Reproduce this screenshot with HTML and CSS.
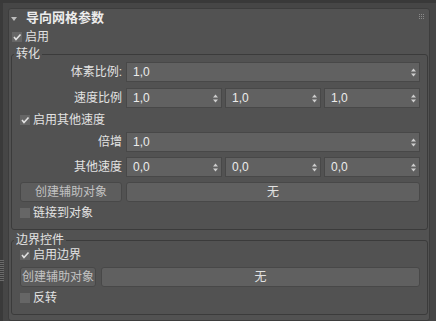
FILE: index.html
```html
<!DOCTYPE html>
<html>
<head>
<meta charset="utf-8">
<link rel="stylesheet" href="styles.css">
</head>
<body>
<div class="topbar"></div>
<div class="app">
  <div class="rail"><div class="rail-grip"></div></div>
  <div class="panel">
    <div class="panel-head">
      <svg class="caret" width="6" height="4" viewBox="0 0 6 4"><polygon points="0,0 6,0 3,4" fill="#bdbdbd"/></svg>
      <span class="title">导向网格参数</span>
      <svg class="dots" width="5" height="5" viewBox="0 0 5 5" fill="#8a8a8a">
        <rect x="0" y="0" width="1" height="1"/><rect x="2" y="0" width="1" height="1"/><rect x="4" y="0" width="1" height="1"/>
        <rect x="0" y="2" width="1" height="1"/><rect x="2" y="2" width="1" height="1"/><rect x="4" y="2" width="1" height="1"/>
        <rect x="0" y="4" width="1" height="1"/><rect x="2" y="4" width="1" height="1"/><rect x="4" y="4" width="1" height="1"/>
      </svg>
    </div>
    <div class="check top-check"><span class="box"><svg width="10" height="10" viewBox="0 0 10 10"><polyline points="2,5 4,7.5 8.5,2.5" fill="none" stroke="#e2e2e2" stroke-width="1.6"/></svg></span>启用</div>

    <fieldset class="group">
      <legend>转化</legend>
      <div class="row first">
        <span class="lbl">体素比例:</span>
        <div class="field"><span>1,0</span><svg class="spin" width="5" height="9" viewBox="0 0 5 9"><polygon points="0,3.5 2.5,0.5 5,3.5" fill="#cfcfcf"/><polygon points="0,5.5 2.5,8.5 5,5.5" fill="#cfcfcf"/></svg></div>
      </div>
      <div class="row">
        <span class="lbl">速度比例</span>
        <div class="triple">
          <div class="field"><span>1,0</span><svg class="spin" width="5" height="9" viewBox="0 0 5 9"><polygon points="0,3.5 2.5,0.5 5,3.5" fill="#cfcfcf"/><polygon points="0,5.5 2.5,8.5 5,5.5" fill="#cfcfcf"/></svg></div>
          <div class="field"><span>1,0</span><svg class="spin" width="5" height="9" viewBox="0 0 5 9"><polygon points="0,3.5 2.5,0.5 5,3.5" fill="#cfcfcf"/><polygon points="0,5.5 2.5,8.5 5,5.5" fill="#cfcfcf"/></svg></div>
          <div class="field"><span>1,0</span><svg class="spin" width="5" height="9" viewBox="0 0 5 9"><polygon points="0,3.5 2.5,0.5 5,3.5" fill="#cfcfcf"/><polygon points="0,5.5 2.5,8.5 5,5.5" fill="#cfcfcf"/></svg></div>
        </div>
      </div>
      <div class="check in-check"><span class="box"><svg width="10" height="10" viewBox="0 0 10 10"><polyline points="2,5 4,7.5 8.5,2.5" fill="none" stroke="#e2e2e2" stroke-width="1.6"/></svg></span>启用其他速度</div>
      <div class="row">
        <span class="lbl">倍增</span>
        <div class="field"><span>1,0</span><svg class="spin" width="5" height="9" viewBox="0 0 5 9"><polygon points="0,3.5 2.5,0.5 5,3.5" fill="#cfcfcf"/><polygon points="0,5.5 2.5,8.5 5,5.5" fill="#cfcfcf"/></svg></div>
      </div>
      <div class="row">
        <span class="lbl">其他速度</span>
        <div class="triple">
          <div class="field"><span>0,0</span><svg class="spin" width="5" height="9" viewBox="0 0 5 9"><polygon points="0,3.5 2.5,0.5 5,3.5" fill="#cfcfcf"/><polygon points="0,5.5 2.5,8.5 5,5.5" fill="#cfcfcf"/></svg></div>
          <div class="field"><span>0,0</span><svg class="spin" width="5" height="9" viewBox="0 0 5 9"><polygon points="0,3.5 2.5,0.5 5,3.5" fill="#cfcfcf"/><polygon points="0,5.5 2.5,8.5 5,5.5" fill="#cfcfcf"/></svg></div>
          <div class="field"><span>0,0</span><svg class="spin" width="5" height="9" viewBox="0 0 5 9"><polygon points="0,3.5 2.5,0.5 5,3.5" fill="#cfcfcf"/><polygon points="0,5.5 2.5,8.5 5,5.5" fill="#cfcfcf"/></svg></div>
        </div>
      </div>
      <div class="row last">
        <div class="btn btn-helper">创建辅助对象</div>
        <div class="btn btn-none">无</div>
      </div>
      <div class="check in-check"><span class="box"></span>链接到对象</div>
    </fieldset>

    <fieldset class="group group2">
      <legend>边界控件</legend>
      <div class="check in-check"><span class="box"><svg width="10" height="10" viewBox="0 0 10 10"><polyline points="2,5 4,7.5 8.5,2.5" fill="none" stroke="#e2e2e2" stroke-width="1.6"/></svg></span>启用边界</div>
      <div class="row last2">
        <div class="btn btn-helper2">创建辅助对象</div>
        <div class="btn btn-none">无</div>
      </div>
      <div class="check in-check"><span class="box"></span>反转</div>
    </fieldset>
  </div>
</div>
</body>
</html>
```
FILE: styles.css
```css
* { box-sizing: border-box; }
html, body { margin: 0; padding: 0; }
body {
  width: 436px;
  height: 321px;
  overflow: hidden;
  background: #464646;
  font-family: "Liberation Sans", "Noto Sans CJK SC", sans-serif;
  font-size: 12px;
  line-height: 14px;
  color: #e2e2e2;
}
.topbar { height: 3px; background: #393939; }
.app { display: flex; padding-top: 5px; }
.rail {
  width: 3px;
  height: 318px;
  margin-top: -5px;
  margin-right: 5px;
  background: #3a3a3a;
  display: flex;
  flex-direction: column;
}
.rail-grip {
  margin-top: 257px;
  height: 22px;
  width: 4px;
  background: repeating-linear-gradient(to bottom, #6a6a6a 0 1px, transparent 1px 2px);
}
.panel {
  width: 422px;
  background: #525252;
  border: 1px solid #3d3d3d;
  border-radius: 3px;
}
.panel-head {
  display: flex;
  align-items: center;
  height: 18px;
  padding-left: 2px;
}
.caret { margin-right: 9px; margin-top: 1px; }
.title { font-weight: bold; font-size: 13px; color: #ececec; }
.dots { margin-left: auto; margin-right: 5px; align-self: flex-start; margin-top: 5px; }

.check {
  display: flex;
  align-items: center;
  height: 14px;
  gap: 3px;
}
.box {
  width: 10px;
  height: 10px;
  background: #666666;
  display: flex;
}
.top-check { margin: 3px 0 0 3px; }

.group {
  margin: 3px 1px 0 2px;
  padding: 1px 7px 9px 8px;
  border: 1px solid #3b3b3b;
  border-radius: 3px;
  min-width: 0;
}
.group legend {
  padding: 0 2px;
  margin-left: -6px;
  line-height: 14px;
}
.group2 { margin-bottom: 3px; }

.row {
  display: flex;
  align-items: center;
  gap: 4px;
  height: 20px;
  margin-bottom: 5px;
}
.row.first { margin-bottom: 6px; }
.row.last { margin-bottom: 4px; }
.lbl { width: 102px; text-align: right; flex: none; }
.triple { flex: 1; display: flex; gap: 3px; height: 20px; }
.field {
  flex: 1;
  height: 20px;
  background: #616161;
  border: 1px solid #484848;
  display: flex;
  align-items: center;
  justify-content: space-between;
  padding: 0 3px 0 6px;
  color: #ececec;
}
.in-check { margin-bottom: 5px; }
.btn {
  height: 20px;
  border: 1px solid #484848;
  border-radius: 3px;
  display: flex;
  align-items: center;
  justify-content: center;
}
.btn-helper { width: 102px; flex: none; background: #5d5d5d; color: #c2c2c2; }
.btn-helper2 { width: 76px; flex: none; background: #5d5d5d; color: #c2c2c2; }
.btn-none { flex: 1; background: #606060; color: #e2e2e2; }
.last2 { gap: 5px; margin-top: 0; margin-bottom: 4px; }
.group .check:last-child { margin-bottom: 0; }
.group2 .in-check:first-of-type { margin-bottom: 5px; }
```
